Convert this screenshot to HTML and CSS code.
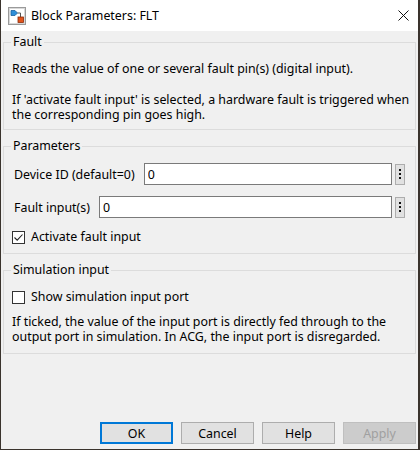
FILE: index.html
```html
<!DOCTYPE html>
<html lang="en">
<head>
  <meta charset="UTF-8" />
  <meta name="viewport" content="width=device-width, initial-scale=1.0"/>
  <title>Block Parameters: FLT</title>
  <link rel="stylesheet" href="styles.css">
</head>
<body>
  <div class="window">
    <div class="titlebar">
      <svg class="app-icon" width="18" height="18" viewBox="0 0 18 18">
        <rect x="0.5" y="0.5" width="17" height="17" fill="#f4f4f4" stroke="#9a9a9a"/>
        <rect x="1.5" y="1.5" width="15" height="15" fill="#ffffff" stroke="#d8d8d8"/>
        <path d="M3 3.5 H7 L9.5 6 L7 8.5 H3 Z" fill="#2f8fd8" stroke="#1a5f9e" stroke-width="0.8"/>
        <path d="M9.5 6 H12.5 V10" fill="none" stroke="#555" stroke-width="1"/>
        <rect x="10" y="10" width="5.5" height="5.5" fill="#e2541c" stroke="#8a2a08" stroke-width="0.8"/>
      </svg>
      <span class="title">Block Parameters: FLT</span>
      <svg class="close" width="11" height="11" viewBox="0 0 11 11">
        <path d="M0.5 0.5 L10.5 10.5 M10.5 0.5 L0.5 10.5" stroke="#111" stroke-width="1"/>
      </svg>
    </div>

    <div class="content">
      <fieldset class="group">
        <legend>Fault</legend>
        <p class="desc">Reads the value of one or several fault pin(s) (digital input).</p>
        <p class="desc">If 'activate fault input' is selected, a hardware fault is triggered when the corresponding pin goes high.</p>
      </fieldset>

      <fieldset class="group params">
        <legend>Parameters</legend>
        <div class="field">
          <label for="dev-id">Device ID (default=0)</label>
          <input type="text" id="dev-id" class="input-field" value="0">
          <span class="more"><i></i><i></i><i></i></span>
        </div>
        <div class="field">
          <label for="fault-in">Fault input(s)</label>
          <input type="text" id="fault-in" class="input-field" value="0">
          <span class="more"><i></i><i></i><i></i></span>
        </div>
        <div class="check">
          <span class="box">
            <svg width="11" height="11" viewBox="0 0 11 11"><path d="M1.5 5.5 L4.2 8.2 L9.5 2.5" fill="none" stroke="#222" stroke-width="1.1"/></svg>
          </span>
          <span>Activate fault input</span>
        </div>
      </fieldset>

      <fieldset class="group sim">
        <legend>Simulation input</legend>
        <div class="check">
          <span class="box"></span>
          <span>Show simulation input port</span>
        </div>
        <p class="desc">If ticked, the value of the input port is directly fed through to the output port in simulation. In ACG, the input port is disregarded.</p>
      </fieldset>
    </div>

    <div class="buttons">
      <button class="button default">OK</button>
      <button class="button">Cancel</button>
      <button class="button">Help</button>
      <button class="button" disabled>Apply</button>
    </div>
  </div>
</body>
</html>
```

FILE: styles.css
```css
body {
  margin: 0;
  background: #3a332d;
  font-family: "Noto Sans", "Open Sans", sans-serif;
  font-size: 12.4px;
  color: #000;
}
.window {
  width: 417px;
  height: 449px;
  margin-left: 1px;
  background: #f0f0f0;
  display: flex;
  flex-direction: column;
}
.titlebar {
  height: 31px;
  background: #fff;
  display: flex;
  align-items: center;
}
.app-icon {
  margin-left: 7px;
}
.title {
  margin-left: 5px;
  line-height: 16px;
}
.close {
  margin-left: auto;
  margin-right: 9px;
}
.content {
  flex: 1;
  padding-top: 3px;
}
.group {
  margin: 0 2px 8px 2px;
  padding: 0 3px 7px 7px;
  border: 1px solid #dcdcdc;
  min-width: 0;
}
.group legend {
  padding: 0 2px;
  line-height: 16px;
}
.desc {
  margin: 11px 0 0 1px;
  line-height: 15px;
}
.desc + .desc {
  margin-top: 16px;
}
.params {
  padding-right: 10px;
  padding-bottom: 8px;
}
.field {
  display: flex;
  align-items: center;
  margin-top: 9px;
  padding-left: 3px;
}
.field + .field {
  margin-top: 11px;
}
.field label {
  margin-right: 9px;
  white-space: nowrap;
}
.input-field {
  flex: 1;
  min-width: 0;
  height: 22px;
  box-sizing: border-box;
  border: 1px solid #7a7a7a;
  padding: 0 3px;
  font: inherit;
  background: #fff;
}
.more {
  width: 10px;
  height: 21px;
  box-sizing: border-box;
  margin-left: 3px;
  border: 1px solid #adadad;
  background: #e1e1e1;
  display: flex;
  flex-direction: column;
  align-items: center;
  justify-content: center;
  gap: 2px;
}
.more i {
  width: 2px;
  height: 2px;
  background: #111;
}
.check {
  display: flex;
  align-items: center;
  gap: 6px;
  margin-top: 11px;
  padding-left: 1px;
  line-height: 16px;
}
.box {
  width: 13px;
  height: 13px;
  box-sizing: border-box;
  border: 1px solid #333;
  background: #fff;
  display: flex;
  align-items: center;
  justify-content: center;
}
.box svg {
  display: block;
}
.sim .desc {
  margin-top: 9px;
}
.sim {
  padding-bottom: 9px;
}
.buttons {
  display: flex;
  justify-content: flex-end;
  gap: 8px;
  padding: 0 2px 5px 0;
}
.button {
  width: 73px;
  height: 22px;
  box-sizing: border-box;
  border: 1px solid #adadad;
  background: #e1e1e1;
  font: inherit;
  color: #000;
  padding: 0;
}
.button.default {
  border: 2px solid #0078d7;
}
.button:disabled {
  background: #cccccc;
  border-color: #bfbfbf;
  color: #a0a0a0;
}
```
